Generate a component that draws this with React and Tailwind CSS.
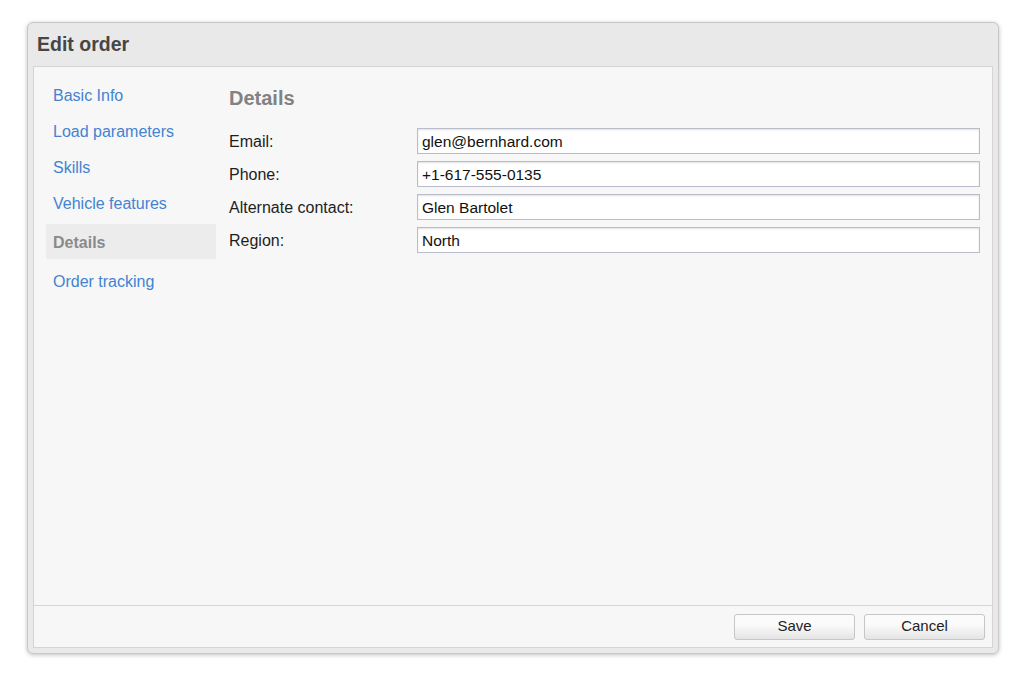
import React from "react";

const font = { fontFamily: '"Liberation Sans", Arial, sans-serif' };

function NavItem({ label, selected, className = "" }) {
  if (selected) {
    return (
      <div className={`h-[35px] w-[170px] ml-[12px] bg-[#ececec] flex items-center pt-[2px] px-[7px] text-[16px] font-bold text-[#8a8a8a] ${className}`}>
        {label}
      </div>
    );
  }
  return (
    <div className={`h-[36px] ml-[12px] flex items-center pt-[1px] px-[7px] text-[16px] text-[#4383d2] ${className}`}>
      {label}
    </div>
  );
}

function Row({ label, value }) {
  return (
    <div className="flex items-center h-[26px]">
      <div className="w-[188px] pt-[1px] text-[16px] text-[#1e1e1e]">{label}</div>
      <div className="flex-1 h-[26px] border border-[#b9bccb] bg-white shadow-[inset_0_1px_2px_rgba(0,0,0,0.12)] flex items-center pt-[2px] px-[4px] text-[15.5px] text-[#111]">
        {value}
      </div>
    </div>
  );
}

function Btn({ children, w }) {
  return (
    <button className={`${w} h-[26px] rounded-[3px] border border-[#c6c6c6] bg-gradient-to-b from-[#fbfbfb] from-40% to-[#e4e4e4] text-[15px] text-[#222] flex items-center justify-center`} style={font}>
      {children}
    </button>
  );
}

export default function App() {
  return (
    <div className="w-[1024px] h-[678px] bg-white pt-[22px] pl-[27px]" style={font}>
      <div className="w-[972px] h-[632px] rounded-[6px] border border-[#c8c8c8] bg-[#e9e9e9] shadow-[0_1px_4px_rgba(0,0,0,0.25)] flex flex-col">
        <div className="h-[43px] flex items-center px-[9px] text-[19.5px] font-bold text-[#464646]">
          Edit order
        </div>
        <div className="mx-[5px] h-[582px] border border-[#dad3d3] bg-[#f7f7f7] flex flex-col">
          <div className="h-[538px] flex">
            <div className="w-[182px] pt-[10px] flex flex-col">
              <NavItem label="Basic Info" />
              <NavItem label="Load parameters" />
              <NavItem label="Skills" />
              <NavItem label="Vehicle features" />
              <NavItem label="Details" selected className="mt-[3px]" />
              <NavItem label="Order tracking" className="mt-[4px]" />
            </div>
            <div className="flex-1 ml-[13px] pr-[12px] pt-[19px] flex flex-col">
              <div className="h-[24px] flex items-center text-[20px] font-bold text-[#828282]">Details</div>
              <div className="mt-[18px] flex flex-col gap-[7px]">
                <Row label="Email:" value="glen@bernhard.com" />
                <Row label="Phone:" value="+1-617-555-0135" />
                <Row label="Alternate contact:" value="Glen Bartolet" />
                <Row label="Region:" value="North" />
              </div>
            </div>
          </div>
          <div className="flex-1 border-t border-[#dad3d3] flex items-center justify-end gap-[9px] pr-[7px]">
            <Btn w="w-[121px]">Save</Btn>
            <Btn w="w-[121px]">Cancel</Btn>
          </div>
        </div>
      </div>
    </div>
  );
}
